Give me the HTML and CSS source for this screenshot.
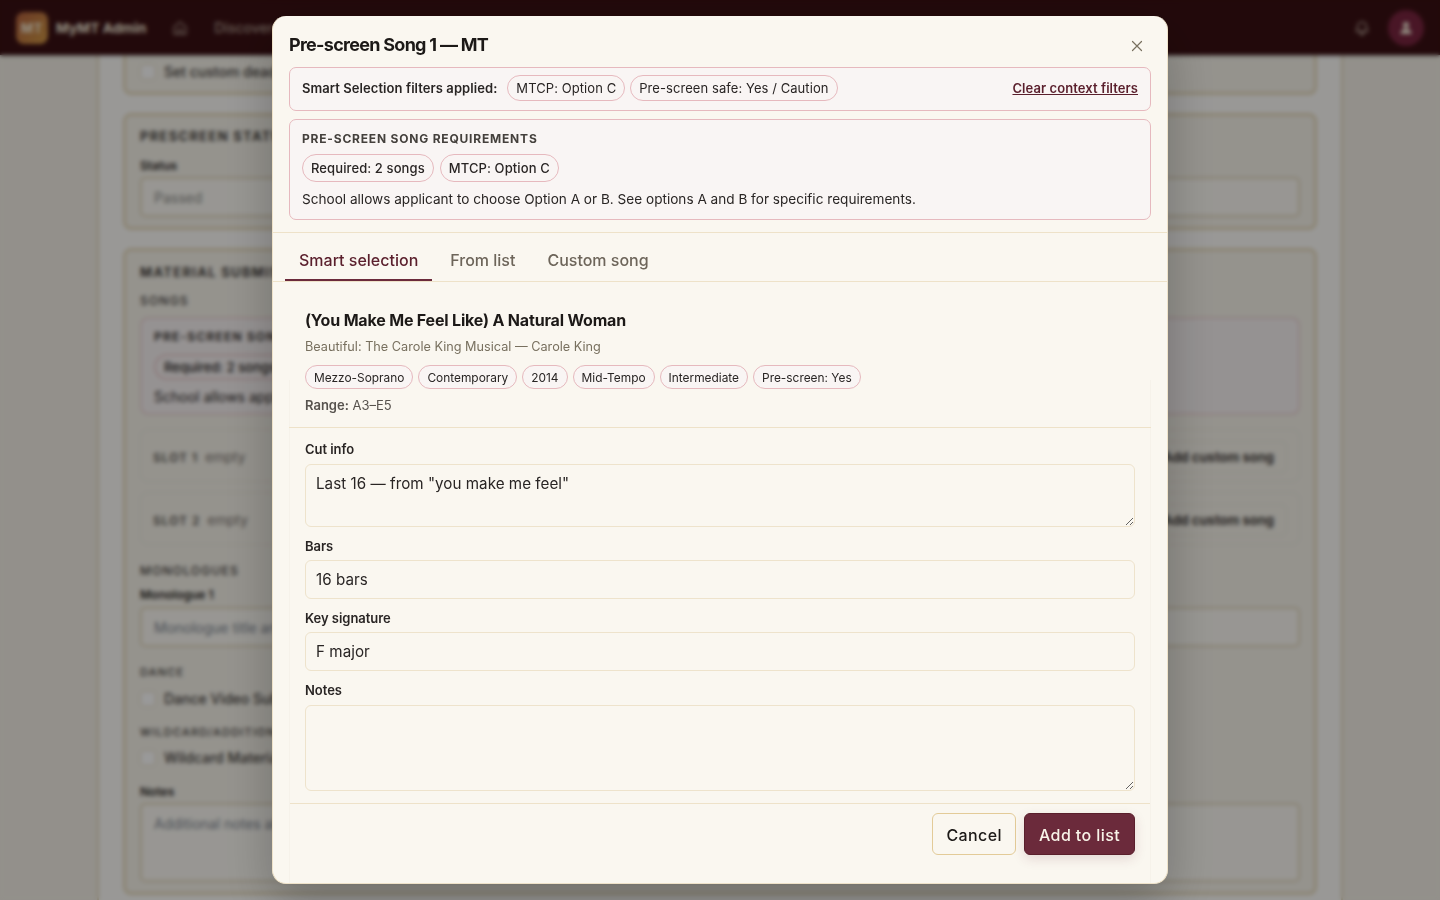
FILE: index.html
```html
<!DOCTYPE html>
<html lang="en">
<head>
<meta charset="utf-8">
<title>Pre-screen Song 1 — MT</title>
<link rel="stylesheet" href="styles.css">
</head>
<body>
<div class="app">
  <header class="topbar">
    <div class="logo">MT</div>
    <span class="brand">MyMT Admin</span>
    <svg class="home" viewBox="0 0 24 24" fill="none" stroke="currentColor" stroke-width="2" stroke-linejoin="round"><path d="M3 10.500 12 3l9 7.500V21H3z"/><path d="M9 21v-7h6v7"/></svg>
    <span class="nav">Discover</span>
    <span class="spacer"></span>
    <svg class="bell" viewBox="0 0 24 24" fill="none" stroke="currentColor" stroke-width="2.400" stroke-linejoin="round"><path d="M12 3a6.500 6.500 0 0 0-6.500 6.500c0 5.500-2 6.500-2 7.500h17c0-1-2-2-2-7.500A6.500 6.500 0 0 0 12 3zM9.800 20.500a2.300 2.300 0 0 0 4.400 0z"/></svg>
    <div class="avatar"><svg viewBox="0 0 24 24" fill="currentColor"><circle cx="12" cy="7.500" r="4.500"/><path d="M3.500 21c.5-5.500 4-8 8.500-8s8 2.500 8.500 8z"/></svg></div>
  </header>
  <main class="page">
    <div class="column">
      <section class="card card-cut">
        <label class="check"><span class="box"></span>Set custom deadline</label>
      </section>
      <section class="card">
        <h3 class="card-title">PRESCREEN STATUS</h3>
        <div class="bg-label">Status</div>
        <div class="bg-field">Passed</div>
      </section>
      <section class="card card-main">
        <h3 class="card-title">MATERIAL SUBMISSIONS</h3>
        <div class="bg-cap">SONGS</div>
        <div class="bg-req">
          <div class="bg-req-title">PRE-SCREEN SONG REQUIREMENTS</div>
          <div class="bg-pills"><span class="bg-pill">Required: 2 songs</span></div>
          <div class="bg-req-text">School allows applicant to choose Option A or B.</div>
        </div>
        <div class="slot"><span class="slot-name">SLOT 1</span><span class="slot-empty">empty</span><span class="spacer"></span><span class="slot-btn">Add custom song</span></div>
        <div class="slot"><span class="slot-name">SLOT 2</span><span class="slot-empty">empty</span><span class="spacer"></span><span class="slot-btn">Add custom song</span></div>
        <div class="bg-cap cap-mono">MONOLOGUES</div>
        <div class="bg-label label-mono">Monologue 1</div>
        <div class="bg-field field-ph">Monologue title and source</div>
        <div class="bg-cap cap-dance">DANCE</div>
        <label class="check check-m"><span class="box"></span>Dance Video Submitted</label>
        <div class="bg-cap cap-wild">WILDCARD/ADDITIONAL</div>
        <label class="check check-w"><span class="box"></span>Wildcard Material</label>
        <div class="bg-label label-notes">Notes</div>
        <div class="bg-area">Additional notes about this school</div>
      </section>
    </div>
  </main>
</div>

<div class="overlay">
  <div class="modal">
    <div class="modal-head">
      <h2 class="modal-title">Pre-screen Song 1 — MT</h2>
      <button class="close" aria-label="Close"><svg viewBox="0 0 12 12" fill="none" stroke="currentColor" stroke-width="1.200" stroke-linecap="round"><path d="M1.500 1.500l9 9M10.500 1.500l-9 9"/></svg></button>
    </div>
    <div class="notice filters">
      <strong class="filters-label">Smart Selection filters applied:</strong>
      <span class="pill pill-lg">MTCP: Option C</span>
      <span class="pill pill-lg">Pre-screen safe: Yes / Caution</span>
      <a class="clear" href="#">Clear context filters</a>
    </div>
    <div class="notice req">
      <div class="req-title">PRE-SCREEN SONG REQUIREMENTS</div>
      <div class="pills"><span class="pill pill-lg pill-strong">Required: 2 songs</span><span class="pill pill-lg pill-strong">MTCP: Option C</span></div>
      <p class="req-text">School allows applicant to choose Option A or B. See options A and B for specific requirements.</p>
    </div>
    <nav class="tabs">
      <span class="tab active">Smart selection</span>
      <span class="tab">From list</span>
      <span class="tab">Custom song</span>
    </nav>
    <div class="song">
      <h3 class="song-title">(You Make Me Feel Like) A Natural Woman</h3>
      <div class="song-sub">Beautiful: The Carole King Musical — Carole King</div>
      <div class="song-pills">
        <span class="pill">Mezzo-Soprano</span><span class="pill">Contemporary</span><span class="pill">2014</span><span class="pill">Mid-Tempo</span><span class="pill">Intermediate</span><span class="pill">Pre-screen: Yes</span>
      </div>
      <div class="range"><b>Range:</b> A3–E5</div>
    </div>
    <form class="form">
      <label class="f-label" for="cut">Cut info</label>
      <textarea id="cut" class="f-input ta-cut">Last 16 — from "you make me feel"</textarea>
      <label class="f-label" for="bars">Bars</label>
      <input id="bars" class="f-input f-line" value="16 bars">
      <label class="f-label" for="key">Key signature</label>
      <input id="key" class="f-input f-line" value="F major">
      <label class="f-label" for="notes">Notes</label>
      <textarea id="notes" class="f-input ta-notes"></textarea>
      <div class="actions">
        <button type="button" class="btn btn-ghost">Cancel</button>
        <button type="button" class="btn btn-primary">Add to list</button>
      </div>
    </form>
  </div>
</div>
</body>
</html>
```

FILE: styles.css
```css
* { box-sizing: border-box; }
html, body { margin: 0; height: 100%; overflow: hidden; }
body { font-family: Inter, "Liberation Sans", sans-serif; color: #1c1917; background: #f5f1e8; }

.app { height: 900px; overflow: hidden; display: flex; flex-direction: column; isolation: isolate; }
.topbar { height: 55px; flex: none; background: #3a1013; display: flex; align-items: center; padding: 0 16px; color: #f5ecd9; box-shadow: 0 1px 3px rgba(0,0,0,.3); position: relative; z-index: 2; }
.logo { width: 32px; height: 32px; border-radius: 8px; background: linear-gradient(135deg, #b5623f, #d29a45); color: #f8efdc; font-size: 13px; font-weight: 700; display: flex; align-items: center; justify-content: center; letter-spacing: .5px; }
.brand { margin-left: 8px; font-size: 13.800px; font-weight: 700; }
.home { width: 16px; height: 18px; margin-left: 26px; opacity: .6; }
.nav { margin-left: 26px; font-size: 14px; font-weight: 500; opacity: .6; }
.spacer { flex: 1; }
.bell { width: 16px; height: 18px; margin-right: 18px; opacity: .6; }
.avatar { width: 36px; height: 36px; border-radius: 50%; background: #7a2540; display: flex; align-items: center; justify-content: center; color: #f5ecd9; }
.avatar svg { width: 16px; height: 16px; }

.page { flex: 1; display: flex; justify-content: center; overflow: hidden; }
.column { width: 1246px; padding: 0 24px; background: #fffefb; border-left: 2px solid #e6d9bd; border-right: 2px solid #e6d9bd; display: flex; flex-direction: column; gap: 18px; }
.card { border: 3px solid #e9dcbf; border-radius: 8px; padding: 12px 14px 10px; background: #f8f5ec; }
.card-cut { height: 40px; flex: none; border-top: none; border-top-left-radius: 0; border-top-right-radius: 0; padding: 8px 14px 0; }
.card-main { flex: none; height: 647px; padding-top: 13px; }
.card-title { margin: 0 0 13px; font-size: 13px; line-height: 17px; font-weight: 700; letter-spacing: 1.300px; color: #44403c; }
.card-main .card-title { margin-bottom: 12px; }
.bg-label { font-size: 12px; line-height: 16px; font-weight: 600; color: #292524; margin-bottom: 3px; }
.bg-field { height: 40px; border: 2px solid #e4d8bd; border-radius: 5px; background: #fdfbf5; padding: 0 12px; display: flex; align-items: center; font-size: 14px; color: #8b8b88; }
.field-ph { color: #7c8490; }
.bg-cap { font-size: 12px; line-height: 16px; font-weight: 500; letter-spacing: 1.200px; color: #44403c; margin: 1px 0 8px; }
.bg-req { height: 98px; border: 2px solid #f0d8d8; border-radius: 8px; background: #f9f4f4; padding: 10px 12px 0; }
.bg-req-title { font-size: 12px; font-weight: 700; letter-spacing: 1.200px; line-height: 16px; color: #44403c; }
.bg-pills { margin-top: 9px; }
.bg-pill { display: inline-block; border: 2px solid #eccfd0; border-radius: 14px; font-size: 13px; font-weight: 500; padding: 3px 8px; }
.bg-req-text { font-size: 14px; margin-top: 8px; color: #292524; }
.slot { height: 53px; margin-top: 14px; border: 1px solid #efe9da; border-radius: 8px; padding: 3px 12px 0; display: flex; align-items: center; }
.slot + .slot { margin-top: 10px; }
.slot-name { font-size: 12px; font-weight: 600; letter-spacing: 1px; color: #57534e; }
.slot-empty { margin-left: 7px; font-size: 13.500px; color: #78716c; }
.slot-btn { height: 32px; padding: 0 12px; border: 1px solid #efe9da; border-radius: 6px; display: flex; align-items: center; font-size: 13px; font-weight: 700; color: #44403c; }
.cap-mono { margin: 18px 0 8px; }
.label-mono { margin-bottom: 4px; }
.cap-dance { margin: 17px 0 0; font-size: 11px; }
.cap-wild { margin: 17px 0 0; font-size: 11px; }
.check { display: flex; align-items: center; gap: 8px; font-size: 14px; line-height: 17px; font-weight: 500; color: #44403c; }
.check-m { margin-top: 10px; }
.check-w { margin-top: 9px; }
.box { width: 16px; height: 16px; border: 1px solid #e6d9bd; border-radius: 4px; background: #fff; flex: none; }
.label-notes { margin: 18px 0 3px; }
.bg-area { height: 79px; border: 2px solid #e4d8bd; border-radius: 5px; background: #fdfbf5; padding: 10px 12px; font-size: 14px; color: #7c8490; }

.overlay { position: fixed; inset: 0; background: rgba(0,0,0,.4); backdrop-filter: blur(2px); }
.modal { position: absolute; left: 272px; top: 16px; width: 896px; height: 868px; background: #faf7f0; border-radius: 14px; border: 1px solid #eee2c9; border-top: none; box-shadow: 0 20px 50px rgba(0,0,0,.25); overflow: hidden; display: flex; flex-direction: column; }
.modal-head { height: 51px; flex: none; display: flex; align-items: flex-start; justify-content: space-between; padding: 18px 18px 0 16px; }
.modal-title { margin: 0; font-size: 18px; line-height: 22px; font-weight: 700; letter-spacing: -.72px; color: #1c1917; }
.close { width: 24px; height: 24px; padding: 6px; border: none; background: none; color: #78705f; }
.close svg { width: 12px; height: 12px; display: block; }
.notice { margin: 0 16px; border: 1px solid #e6b9be; border-radius: 7px; background: #f9f5f4; padding: 0 12px; flex: none; }
.filters { height: 44px; padding-bottom: 2px; display: flex; align-items: center; gap: 5px; }
.filters-label { font-size: 13px; font-weight: 600; letter-spacing: .07px; margin-right: 5px; color: #292524; }
.clear { margin-left: auto; font-size: 13px; font-weight: 600; letter-spacing: .07px; color: #5a1f2c; }
.req { height: 101px; margin-top: 8px; padding-top: 11px; }
.req-title { font-size: 12px; line-height: 15px; font-weight: 700; letter-spacing: .8px; color: #44403c; }
.pills { display: flex; gap: 6px; margin-top: 8px; }
.pill { display: inline-flex; align-items: center; height: 24px; padding: 0 8px; border: 1px solid #e6b9be; border-radius: 12px; background: #f9f5f4; font-size: 11.900px; color: #292524; white-space: nowrap; }
.pill-lg { height: 26px; border-radius: 13px; font-size: 13px; letter-spacing: .07px; }
.pill-strong { height: 28px; border-radius: 14px; font-weight: 500; letter-spacing: .1px; }
.req-text { margin: 7px 0 0; font-size: 13.600px; line-height: 20px; color: #292524; }
.tabs { flex: none; height: 50px; margin-top: 12px; padding: 0 12px; border-top: 1px solid #eee2c9; border-bottom: 1px solid #eee2c9; display: flex; gap: 4px; }
.tab { padding: 0 14px; height: 48px; line-height: 54px; font-size: 16px; font-weight: 500; color: #6d655a; }
.tab.active { color: #5a1f2c; border-bottom: 2px solid #6b2a3b; }
.song { flex: none; height: 146px; margin: 0 16px; padding: 26px 16px 0; border-bottom: 1px solid #eee2c9; position: relative; }
.song::before { content: ""; position: absolute; left: 0; right: 0; top: 98px; bottom: 0; border-left: 1px solid rgba(120,100,60,.03); border-right: 1px solid rgba(120,100,60,.03); }
.song-title { margin: 0; font-size: 16px; line-height: 24px; font-weight: 700; letter-spacing: -.18px; color: #1c1917; }
.song-sub { margin-top: 6px; font-size: 12.700px; line-height: 18px; color: #78705f; }
.song-pills { display: flex; gap: 5px; margin-top: 9px; }
.range { margin-top: 7px; font-size: 13px; line-height: 18px; color: #57534e; }
.range b { font-weight: 600; }
.form { flex: 1; margin: 0 16px; padding: 2px 15px 0; display: flex; flex-direction: column; border-left: 1px solid rgba(120,100,60,.03); border-right: 1px solid rgba(120,100,60,.03); }
.f-label { display: block; margin-top: 10px; font-size: 13px; line-height: 18px; font-weight: 600; letter-spacing: -.04px; color: #292524; }
.f-input { display: block; width: 100%; margin-top: 5px; padding: 7px 10px; border: 1px solid #eee3cc; border-radius: 6px; background: #faf7f0; font: 400 15.200px/24px Inter, "Liberation Sans", sans-serif; letter-spacing: .03px; color: #292524; outline: none; }
.ta-cut { height: 63px; margin-top: 6px; }
.f-line { height: 39px; }
.ta-notes { height: 86px; margin-top: 6px; }
.actions { margin: 12px -15px 0; padding: 9px 15px 0; border-top: 1px solid #eee2c9; display: flex; justify-content: flex-end; gap: 8px; }
.btn { height: 42px; border-radius: 6px; padding: 1px 14px 0; font: 500 16px Inter, "Liberation Sans", sans-serif; letter-spacing: .4px; }
.btn-ghost { padding: 1px 13px 0; background: #faf7f0; border: 1px solid #e3cb98; color: #1c1917; }
.btn-primary { background: #6b2a3b; border: 1px solid #5a1f2c; color: #f8f3e8; box-shadow: 0 4px 12px rgba(107,42,59,.15); }
```
